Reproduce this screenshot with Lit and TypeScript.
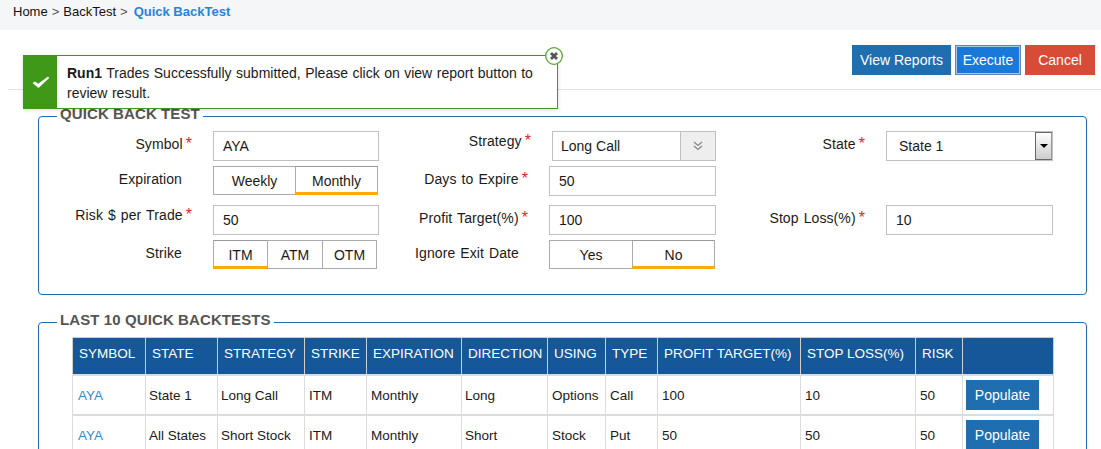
import { LitElement, css, html } from "lit";
import { customElement } from "lit/decorators.js";

const HEADERS = [
  "SYMBOL",
  "STATE",
  "STRATEGY",
  "STRIKE",
  "EXPIRATION",
  "DIRECTION",
  "USING",
  "TYPE",
  "PROFIT TARGET(%)",
  "STOP LOSS(%)",
  "RISK",
  "",
];
const WIDTHS = [73, 72, 87, 62, 95, 86, 58, 52, 143, 115, 47, 91];
const ROWS = [
  ["AYA", "State 1", "Long Call", "ITM", "Monthly", "Long", "Options", "Call", "100", "10", "50"],
  ["AYA", "All States", "Short Stock", "ITM", "Monthly", "Short", "Stock", "Put", "50", "50", "50"],
];

@customElement("app-root")
export class AppRoot extends LitElement {
  static styles = css`
    :host {
      display: block;
      position: relative;
      width: 1101px;
      height: 449px;
      overflow: hidden;
      background: #fff;
      font-family: "Liberation Sans", Arial, sans-serif;
      font-size: 14px;
      color: #1a1a1a;
    }

    .crumbs {
      display: flex;
      align-items: center;
      gap: 4px;
      height: 30px;
      padding: 0 0 8px 13px;
      box-sizing: border-box;
      background: #f5f6f8;
      font-size: 13px;
      color: #111;
    }
    .crumbs .sep {
      color: #555;
    }
    .crumbs .current {
      color: #2583dc;
      font-weight: bold;
      margin-left: 2px;
    }

    .toolbar {
      display: flex;
      justify-content: flex-end;
      gap: 4px;
      height: 60px;
      box-sizing: border-box;
      margin-left: 8px;
      padding: 15px 6px 0 0;
      border-bottom: 1px solid #e4e4e4;
    }
    .btn {
      display: flex;
      align-items: center;
      justify-content: center;
      height: 30px;
      box-sizing: border-box;
      color: #fff;
      font-size: 14px;
    }
    .btn.view {
      width: 99px;
      background: #1f6eb0;
    }
    .btn.exec {
      width: 66px;
      background: #1a78d8;
      border: 1px solid #5f86ad;
      box-shadow: inset 0 0 0 1px #a8c8e8;
    }
    .btn.cancel {
      width: 70px;
      background: #d84b37;
    }

    .toast {
      position: absolute;
      left: 23px;
      top: 55px;
      width: 535px;
      height: 54px;
      box-sizing: border-box;
      display: flex;
      background: #fff;
      border: 1px solid #409818;
      box-shadow: 0 1px 4px rgba(0, 0, 0, 0.15);
      z-index: 2;
    }
    .toast .mark {
      display: flex;
      align-items: center;
      justify-content: center;
      width: 33px;
      background: #409818;
      flex: none;
    }
    .toast .msg {
      padding: 7px 10px 0 10px;
      font-size: 14px;
      line-height: 20px;
      word-spacing: 0.6px;
    }
    .toast .close {
      position: absolute;
      right: -7px;
      top: -10px;
      width: 20px;
      height: 20px;
    }

    fieldset {
      margin: 0 14px 0 38px;
      padding: 0;
      border: 1px solid #1f6eb0;
      border-radius: 4px;
      min-width: 0;
    }
    legend {
      margin-left: 18px;
      padding: 0 3px 4px;
      font-size: 15px;
      line-height: 16px;
      font-weight: bold;
      color: #555;
      letter-spacing: 0.1px;
    }
    .quick {
      margin-top: 16px;
      padding: 5px 0 25px;
    }
    .history {
      margin-top: 17px;
      padding: 5px 0 20px;
    }

    .form {
      display: grid;
      grid-template-columns: 174px 167px 169px 167px 170px 167px;
      grid-template-rows: 35px 39px 35px 29px;
      align-items: start;
    }
    .label {
      padding: 3px 21px 0 0;
      line-height: 20px;
      text-align: right;
      font-size: 14px;
      letter-spacing: 0.1px;
      word-spacing: 1px;
    }
    .label.plain {
      padding-right: 31px;
    }
    .label.ignore {
      padding-right: 30px;
    }
    .label.high {
      padding-top: 0;
    }
    .label.strategy {
      padding-right: 18px;
    }
    .label i {
      color: #e8202a;
      font-style: normal;
      font-size: 16px;
      line-height: 0;
      margin-left: -2px;
    }
    .field {
      display: block;
      width: 167px;
      height: 30px;
      box-sizing: border-box;
      padding: 0 9px;
      border: 1px solid #c0c0c0;
      font: inherit;
      font-size: 14px;
      color: #1a1a1a;
      outline: none;
    }
    .field.narrow {
      width: 166px;
    }
    .combo {
      display: flex;
      align-items: center;
      height: 30px;
      box-sizing: border-box;
      border: 1px solid #c0c0c0;
      font-size: 14px;
    }
    .combo.strategy {
      margin-left: 3px;
      padding-left: 8px;
    }
    .combo.state {
      padding-left: 12px;
    }
    .combo span {
      flex: 1;
    }
    .combo .chev {
      display: flex;
      align-items: center;
      justify-content: center;
      width: 34px;
      height: 100%;
      background: #eeeeee;
      border-left: 1px solid #c0c0c0;
    }
    .combo .arrow {
      display: flex;
      align-items: center;
      justify-content: center;
      width: 17px;
      height: 28px;
      box-sizing: border-box;
      border: 1px solid #666;
      border-right-color: #999;
      background: linear-gradient(#fff, #ccc);
    }
    .combo .arrow::after {
      content: "";
      border: 4px solid transparent;
      border-top: 4px solid #000;
      border-bottom: 0;
    }

    .toggle {
      display: flex;
      height: 29px;
      box-sizing: border-box;
      font-size: 14px;
    }
    .toggle div {
      display: flex;
      align-items: center;
      justify-content: center;
      box-sizing: border-box;
      border: 1px solid #aaa;
      margin-left: -1px;
    }
    .toggle div:first-child {
      margin-left: 0;
    }
    .toggle .on {
      border-bottom: 3px solid #ffab00;
      padding-top: 2px;
      border-top-color: #999;
    }

    table {
      margin-left: 33px;
      width: 981px;
      table-layout: fixed;
      border-collapse: collapse;
      font-size: 13.5px;
    }
    th {
      height: 37px;
      padding: 0 0 5px 6px;
      box-sizing: border-box;
      background: #155799;
      color: #fff;
      font-size: 13.5px;
      font-weight: normal;
      text-align: left;
      border: 1px solid #cfcfcf;
      white-space: nowrap;
    }
    td {
      height: 40px;
      padding: 1px 0 0 4px;
      box-sizing: border-box;
      border-style: solid;
      border-color: #dcdcdc;
      border-width: 2px 1px;
      white-space: nowrap;
    }
    td:nth-child(1) {
      padding-left: 5px;
    }
    td:nth-child(2),
    td:nth-child(3),
    td:nth-child(6) {
      padding-left: 3px;
    }
    td:last-child {
      padding-left: 3px;
    }
    td a {
      color: #3a87c8;
      text-decoration: none;
    }
    .populate {
      display: flex;
      align-items: center;
      justify-content: center;
      width: 73px;
      height: 30px;
      background: #1f6eb0;
      color: #fff;
      font-size: 14px;
    }
  `;

  private star() {
    return html`<i>*</i>`;
  }

  private toggle(items: Array<[string, number]>, active: string) {
    return html`
      <div class="toggle">
        ${items.map(
          ([label, w]) =>
            html`<div class=${label === active ? "on" : ""} style="width:${w}px">${label}</div>`,
        )}
      </div>
    `;
  }

  render() {
    return html`
      <nav class="crumbs">
        <span>Home</span><span class="sep">&gt;</span>
        <span>BackTest</span><span class="sep">&gt;</span>
        <span class="current">Quick BackTest</span>
      </nav>

      <div class="toolbar">
        <div class="btn view">View Reports</div>
        <div class="btn exec">Execute</div>
        <div class="btn cancel">Cancel</div>
      </div>

      <div class="toast">
        <div class="mark">
          <svg width="18" height="14" viewBox="0 0 18 14">
            <path d="M0.5 8l2.5-1.6 3.2 2.4L16 1.5l1.2 1.5L6.5 13z" fill="#fff" />
          </svg>
        </div>
        <div class="msg"><b>Run1</b> Trades Successfully submitted, Please click on view report button to review result.</div>
        <svg class="close" viewBox="0 0 20 20">
          <circle cx="10" cy="10" r="8.3" fill="#fff" stroke="#55a532" stroke-width="1.3" />
          <path d="M7 7l6 6M13 7l-6 6" stroke="#555" stroke-width="2.8" />
        </svg>
      </div>

      <fieldset class="quick">
        <legend>QUICK BACK TEST</legend>
        <div class="form">
          <div class="label">Symbol ${this.star()}</div>
          <input class="field narrow" value="AYA" />
          <div class="label high strategy">Strategy ${this.star()}</div>
          <div class="combo strategy">
            <span>Long Call</span>
            <div class="chev">
              <svg width="10" height="10" viewBox="0 0 10 10" fill="none" stroke="#8a8a8a" stroke-width="1.3">
                <path d="M1 1l4 3.5L9 1M1 5l4 3.5L9 5" />
              </svg>
            </div>
          </div>
          <div class="label">State ${this.star()}</div>
          <div class="combo state"><span>State 1</span><div class="arrow"></div></div>

          <div class="label plain">Expiration</div>
          ${this.toggle([["Weekly", 83], ["Monthly", 83]], "Monthly")}
          <div class="label">Days to Expire ${this.star()}</div>
          <input class="field" value="50" />
          <div></div>
          <div></div>

          <div class="label high">Risk $ per Trade ${this.star()}</div>
          <input class="field narrow" value="50" />
          <div class="label">Profit Target(%) ${this.star()}</div>
          <input class="field" value="100" />
          <div class="label">Stop Loss(%) ${this.star()}</div>
          <input class="field" value="10" />

          <div class="label plain">Strike</div>
          ${this.toggle([["ITM", 55], ["ATM", 56], ["OTM", 55]], "ITM")}
          <div class="label ignore">Ignore Exit Date</div>
          ${this.toggle([["Yes", 84], ["No", 83]], "No")}
        </div>
      </fieldset>

      <fieldset class="history">
        <legend>LAST 10 QUICK BACKTESTS</legend>
        <table>
          <colgroup>${WIDTHS.map((w) => html`<col style="width:${w}px" />`)}</colgroup>
          <thead>
            <tr>${HEADERS.map((h) => html`<th>${h}</th>`)}</tr>
          </thead>
          <tbody>
            ${ROWS.map(
              (row) => html`
                <tr>
                  ${row.map((c, i) => (i === 0 ? html`<td><a>${c}</a></td>` : html`<td>${c}</td>`))}
                  <td><div class="populate">Populate</div></td>
                </tr>
              `,
            )}
          </tbody>
        </table>
      </fieldset>
    `;
  }
}

declare global {
  interface HTMLElementTagNameMap {
    "app-root": AppRoot;
  }
}
